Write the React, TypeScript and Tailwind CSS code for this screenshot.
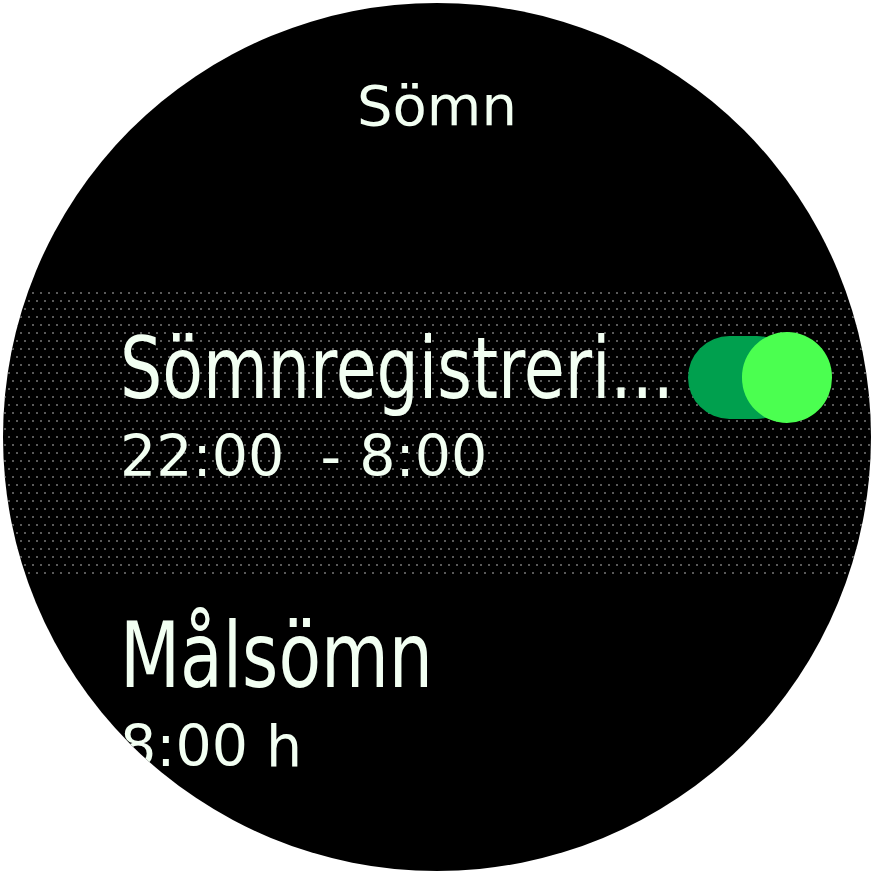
import React from 'react';

const Toggle: React.FC<{ on: boolean }> = ({ on }) => (
  <div className="relative w-[144px] h-[91px] shrink-0">
    <div className="absolute left-0 top-[4px] w-[110px] h-[83px] rounded-full bg-[#00a04e]" />
    <div
      className={`absolute top-0 w-[90px] h-[91px] rounded-full bg-[#4bff50] ${on ? 'right-0' : 'left-0'}`}
    />
  </div>
);

interface SettingProps {
  title: string;
  value: string;
  size: string;
}

// titles use a condensed face, squeezed a bit more to match the watch font
const SettingText: React.FC<SettingProps> = ({ title, value, size }) => (
  <div className="flex flex-col min-w-0 flex-1">
    <div
      className={`font-['DejaVu_Sans_Condensed','DejaVu_Sans',sans-serif] leading-none whitespace-nowrap origin-left scale-x-[0.86] ${size}`}
    >
      {title}
    </div>
    <div className="mt-[17px] font-['DejaVu_Sans',sans-serif] text-[57px] leading-none whitespace-pre">
      {value}
    </div>
  </div>
);

export default function App() {
  return (
    <div className="relative w-[872px] h-[872px] bg-white overflow-hidden">
      <div className="absolute left-[3px] top-[3px] w-[868px] h-[868px] rounded-full bg-black overflow-hidden text-[#f2fff2]">
        <div className="h-[287px] pt-[75px] text-center font-['DejaVu_Sans',sans-serif] text-[56px] leading-none">
          Sömn
        </div>

        <div className="h-[288px] pl-[117px] pr-[39px] pt-[35px] bg-[conic-gradient(from_270deg_at_2px_2px,#5a5a5a_25%,transparent_0),conic-gradient(from_270deg_at_2px_2px,#5a5a5a_25%,transparent_0)] bg-[length:8px_16px] bg-[position:5px_2px,1px_10px] bg-repeat">
          <div className="flex items-start justify-between">
            <SettingText title="Sömnregistreri..." value="22:00  - 8:00" size="text-[86px]" />
            <div className="mt-[7px]">
              <Toggle on />
            </div>
          </div>
        </div>

        <div className="flex pl-[117px] pt-[33px]">
          <SettingText title="Målsömn" value="8:00 h" size="text-[90px]" />
        </div>
      </div>
    </div>
  );
}
